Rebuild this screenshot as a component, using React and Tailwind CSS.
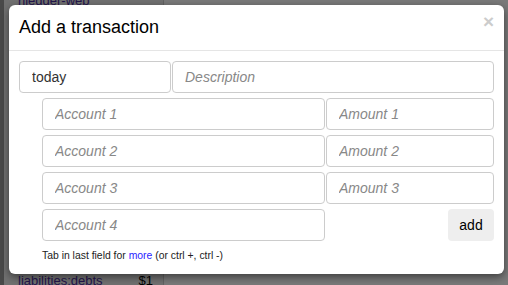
import React from "react";

const accounts = [1, 2, 3, 4];

function Field({ placeholder, value, className = "" }) {
  return (
    <input
      type="text"
      defaultValue={value}
      placeholder={placeholder}
      readOnly
      className={`h-[32px] min-w-0 rounded-[4px] border border-[#cccccc] bg-white pl-[12px] text-[14px] text-[#333] outline-none placeholder:italic placeholder:text-[#888] ${className}`}
    />
  );
}

export default function App() {
  return (
    <div className="relative h-[285px] w-[508px] overflow-hidden bg-white font-['Liberation_Sans',Arial,sans-serif]">
      {/* page behind the modal */}
      <div className="flex h-full">
        <div className="flex w-[164px] flex-col justify-between border-r border-[#d0d0d0] bg-[#ececec] border-l-[4px] border-l-[#9a9a9a]">
          <div className="-mt-[9px] pl-[14px] text-[13px] text-[#4b2fa0]">hledger-web</div>
          <div className="-mb-[4px] flex justify-between pl-[14px] pr-[10px] text-[13px] leading-[16px] text-[#4b2fa0]">
            <span>liabilities:debts</span>
            <span className="text-black">$1</span>
          </div>
        </div>
        <div className="flex-1 pl-[70px]">
          <h1 className="-mt-[36px] text-[28px] font-bold text-black">hledger journal</h1>
        </div>
      </div>

      {/* backdrop + modal */}
      <div className="absolute inset-0 bg-black/[0.52] pl-[9px] pt-[5px]">
        <div className="w-[495px] rounded-[6px] bg-white shadow-[0_3px_9px_rgba(0,0,0,0.5)]">
          <div className="flex h-[46px] items-center justify-between border-b border-[#e5e5e5] pl-[10px] pr-[10px]">
            <h3 className="text-[18px] text-black">Add a transaction</h3>
            <span className="-mt-[12px] text-[19px] font-bold leading-none text-[#cccccc]">×</span>
          </div>
          <div className="pb-[12px] pl-[10px] pr-[10px] pt-[10px]">
            <div className="flex flex-col gap-[5px]">
              <div className="flex gap-[1px]">
                <Field value="today" className="w-[152px] shrink-0" />
                <Field placeholder="Description" className="flex-1" />
              </div>
              {accounts.map((n) => (
                <div key={n} className="ml-[23px] flex gap-[1px]">
                  <Field placeholder={`Account ${n}`} className="w-[283px] shrink-0" />
                  {n < 4 ? (
                    <Field placeholder={`Amount ${n}`} className="flex-1" />
                  ) : (
                    <div className="flex flex-1 justify-end">
                      <button className="h-[32px] w-[46px] rounded-[4px] bg-[#eeeeee] text-[14px] text-black">
                        add
                      </button>
                    </div>
                  )}
                </div>
              ))}
            </div>
            <p className="ml-[23px] mt-[9px] text-[10.4px] leading-[12px] text-[#222]">
              Tab in last field for <span className="text-[#2a22ff]">more</span> (or ctrl +, ctrl -)
            </p>
          </div>
        </div>
      </div>
    </div>
  );
}
